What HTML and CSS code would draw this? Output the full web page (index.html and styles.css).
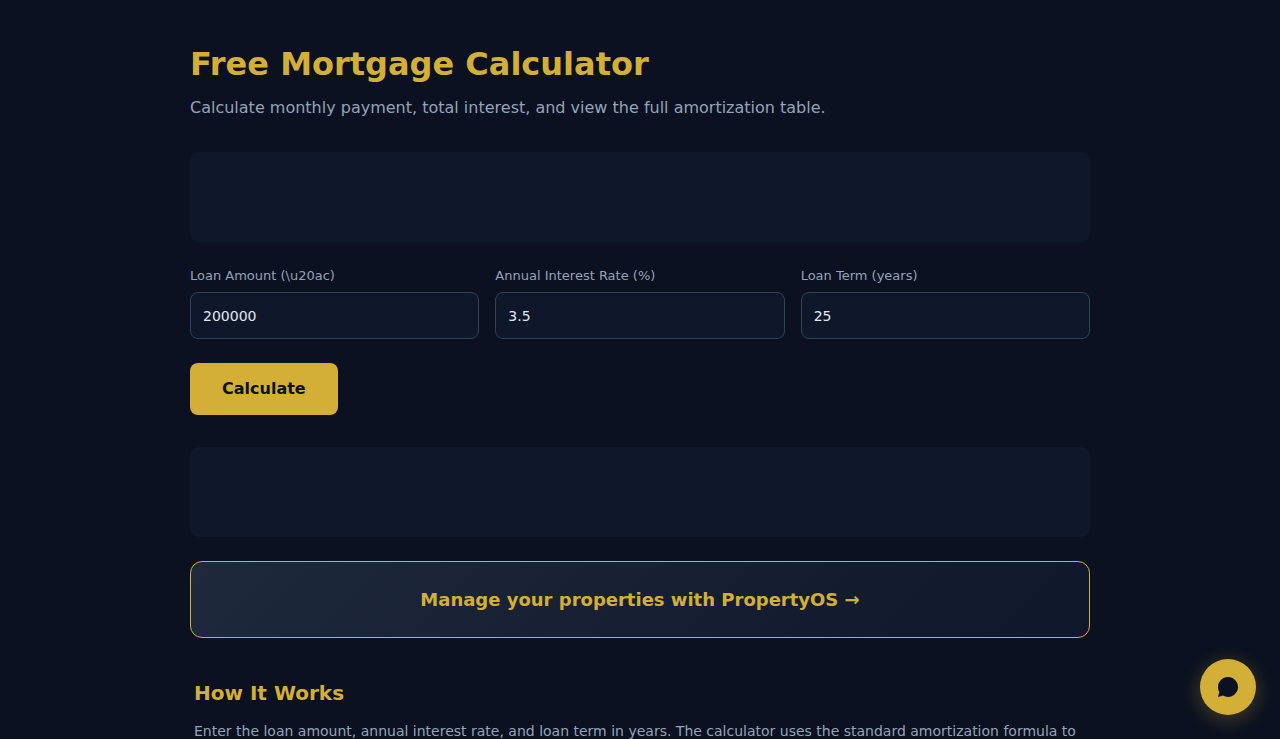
FILE: index.html
```html
<!DOCTYPE html>
<html lang="en">
<head>
  <meta charset="UTF-8">
  <meta name="viewport" content="width=device-width, initial-scale=1.0">
  <title>Free Mortgage Calculator</title>
  <link rel="stylesheet" href="styles.css">
</head>
<body>
  <main class="container">
    <h1>Free Mortgage Calculator</h1>
    <p class="subtitle">Calculate monthly payment, total interest, and view the full amortization table.</p>

    <div class="ad-slot"></div>

    <form class="calc-form">
      <div class="form-grid">
        <div class="form-group">
          <label for="amount">Loan Amount (\u20ac)</label>
          <input type="text" inputmode="decimal" id="amount" value="200000">
        </div>
        <div class="form-group">
          <label for="rate">Annual Interest Rate (%)</label>
          <input type="text" inputmode="decimal" id="rate" value="3.5">
        </div>
        <div class="form-group">
          <label for="years">Loan Term (years)</label>
          <input type="text" inputmode="numeric" id="years" value="25">
        </div>
      </div>
      <button type="button" class="btn">Calculate</button>
    </form>

    <div class="ad-slot"></div>

    <div class="cta">
      <a href="#">Manage your properties with PropertyOS →</a>
    </div>

    <section class="info">
      <h2>How It Works</h2>
      <p>Enter the loan amount, annual interest rate, and loan term in years. The calculator uses the standard amortization formula to</p>
    </section>
  </main>

  <button type="button" class="chat-btn" aria-label="Open chat">
    <svg width="24" height="24" viewBox="0 0 24 24" aria-hidden="true">
      <path d="M12 2C6.48 2 2 6.48 2 12c0 1.85.5 3.58 1.38 5.06L2 22l4.94-1.38A9.95 9.95 0 0 0 12 22c5.52 0 10-4.48 10-10S17.52 2 12 2z" fill="#0b1120"/>
    </svg>
  </button>
</body>
</html>
```
FILE: styles.css
```css
* {
  box-sizing: border-box;
  margin: 0;
  padding: 0;
}

body {
  background: #0b1120;
  color: #e2e8f0;
  font-family: "DejaVu Sans", sans-serif;
  line-height: 1.5;
}

.container {
  max-width: 948px;
  margin: 0 auto;
  padding: 40px 24px;
}

h1 {
  color: #d4af37;
  font-size: 32px;
  margin-bottom: 8px;
}

.subtitle {
  color: #94a3b8;
  font-size: 16px;
  margin-bottom: 32px;
}

.ad-slot {
  min-height: 90px;
  background: #0f172a;
  border-radius: 8px;
  margin: 24px 0;
}

.form-grid {
  display: grid;
  grid-template-columns: repeat(3, 1fr);
  gap: 16px;
  margin-bottom: 24px;
}

.form-group label {
  display: block;
  color: #94a3b8;
  font-size: 13px;
  line-height: 20px;
  margin-bottom: 6px;
}

.form-group input {
  display: block;
  width: 100%;
  height: 47px;
  padding: 14px 12px;
  background: #0f172a;
  border: 1px solid #334155;
  border-radius: 8px;
  color: #e2e8f0;
  font-family: inherit;
  font-size: 14px;
}

.btn {
  display: block;
  padding: 16px 32px;
  background: #d4af37;
  border: none;
  border-radius: 8px;
  color: #0b1120;
  font-family: inherit;
  font-size: 16px;
  font-weight: 700;
  line-height: 20px;
  cursor: pointer;
}

.calc-form {
  margin-bottom: 32px;
}

.cta {
  padding: 24px;
  background: linear-gradient(135deg, #1e293b, #0f172a);
  border: 1px solid #d4af37;
  border-radius: 12px;
  font-size: 18px;
  text-align: center;
}

.cta a {
  color: #d4af37;
  font-weight: 700;
  text-decoration: none;
}

.info {
  margin-top: 40px;
  padding: 0 4px;
}

.info h2 {
  color: #d4af37;
  font-size: 20px;
  margin-bottom: 12px;
}

.info p {
  color: #94a3b8;
  font-size: 14px;
  line-height: 22px;
}

.chat-btn {
  position: fixed;
  right: 24px;
  bottom: 24px;
  display: flex;
  align-items: center;
  justify-content: center;
  width: 56px;
  height: 56px;
  background: #d4af37;
  border: none;
  border-radius: 50%;
  box-shadow: 0 4px 20px rgba(212, 175, 55, 0.3);
  cursor: pointer;
}
```
